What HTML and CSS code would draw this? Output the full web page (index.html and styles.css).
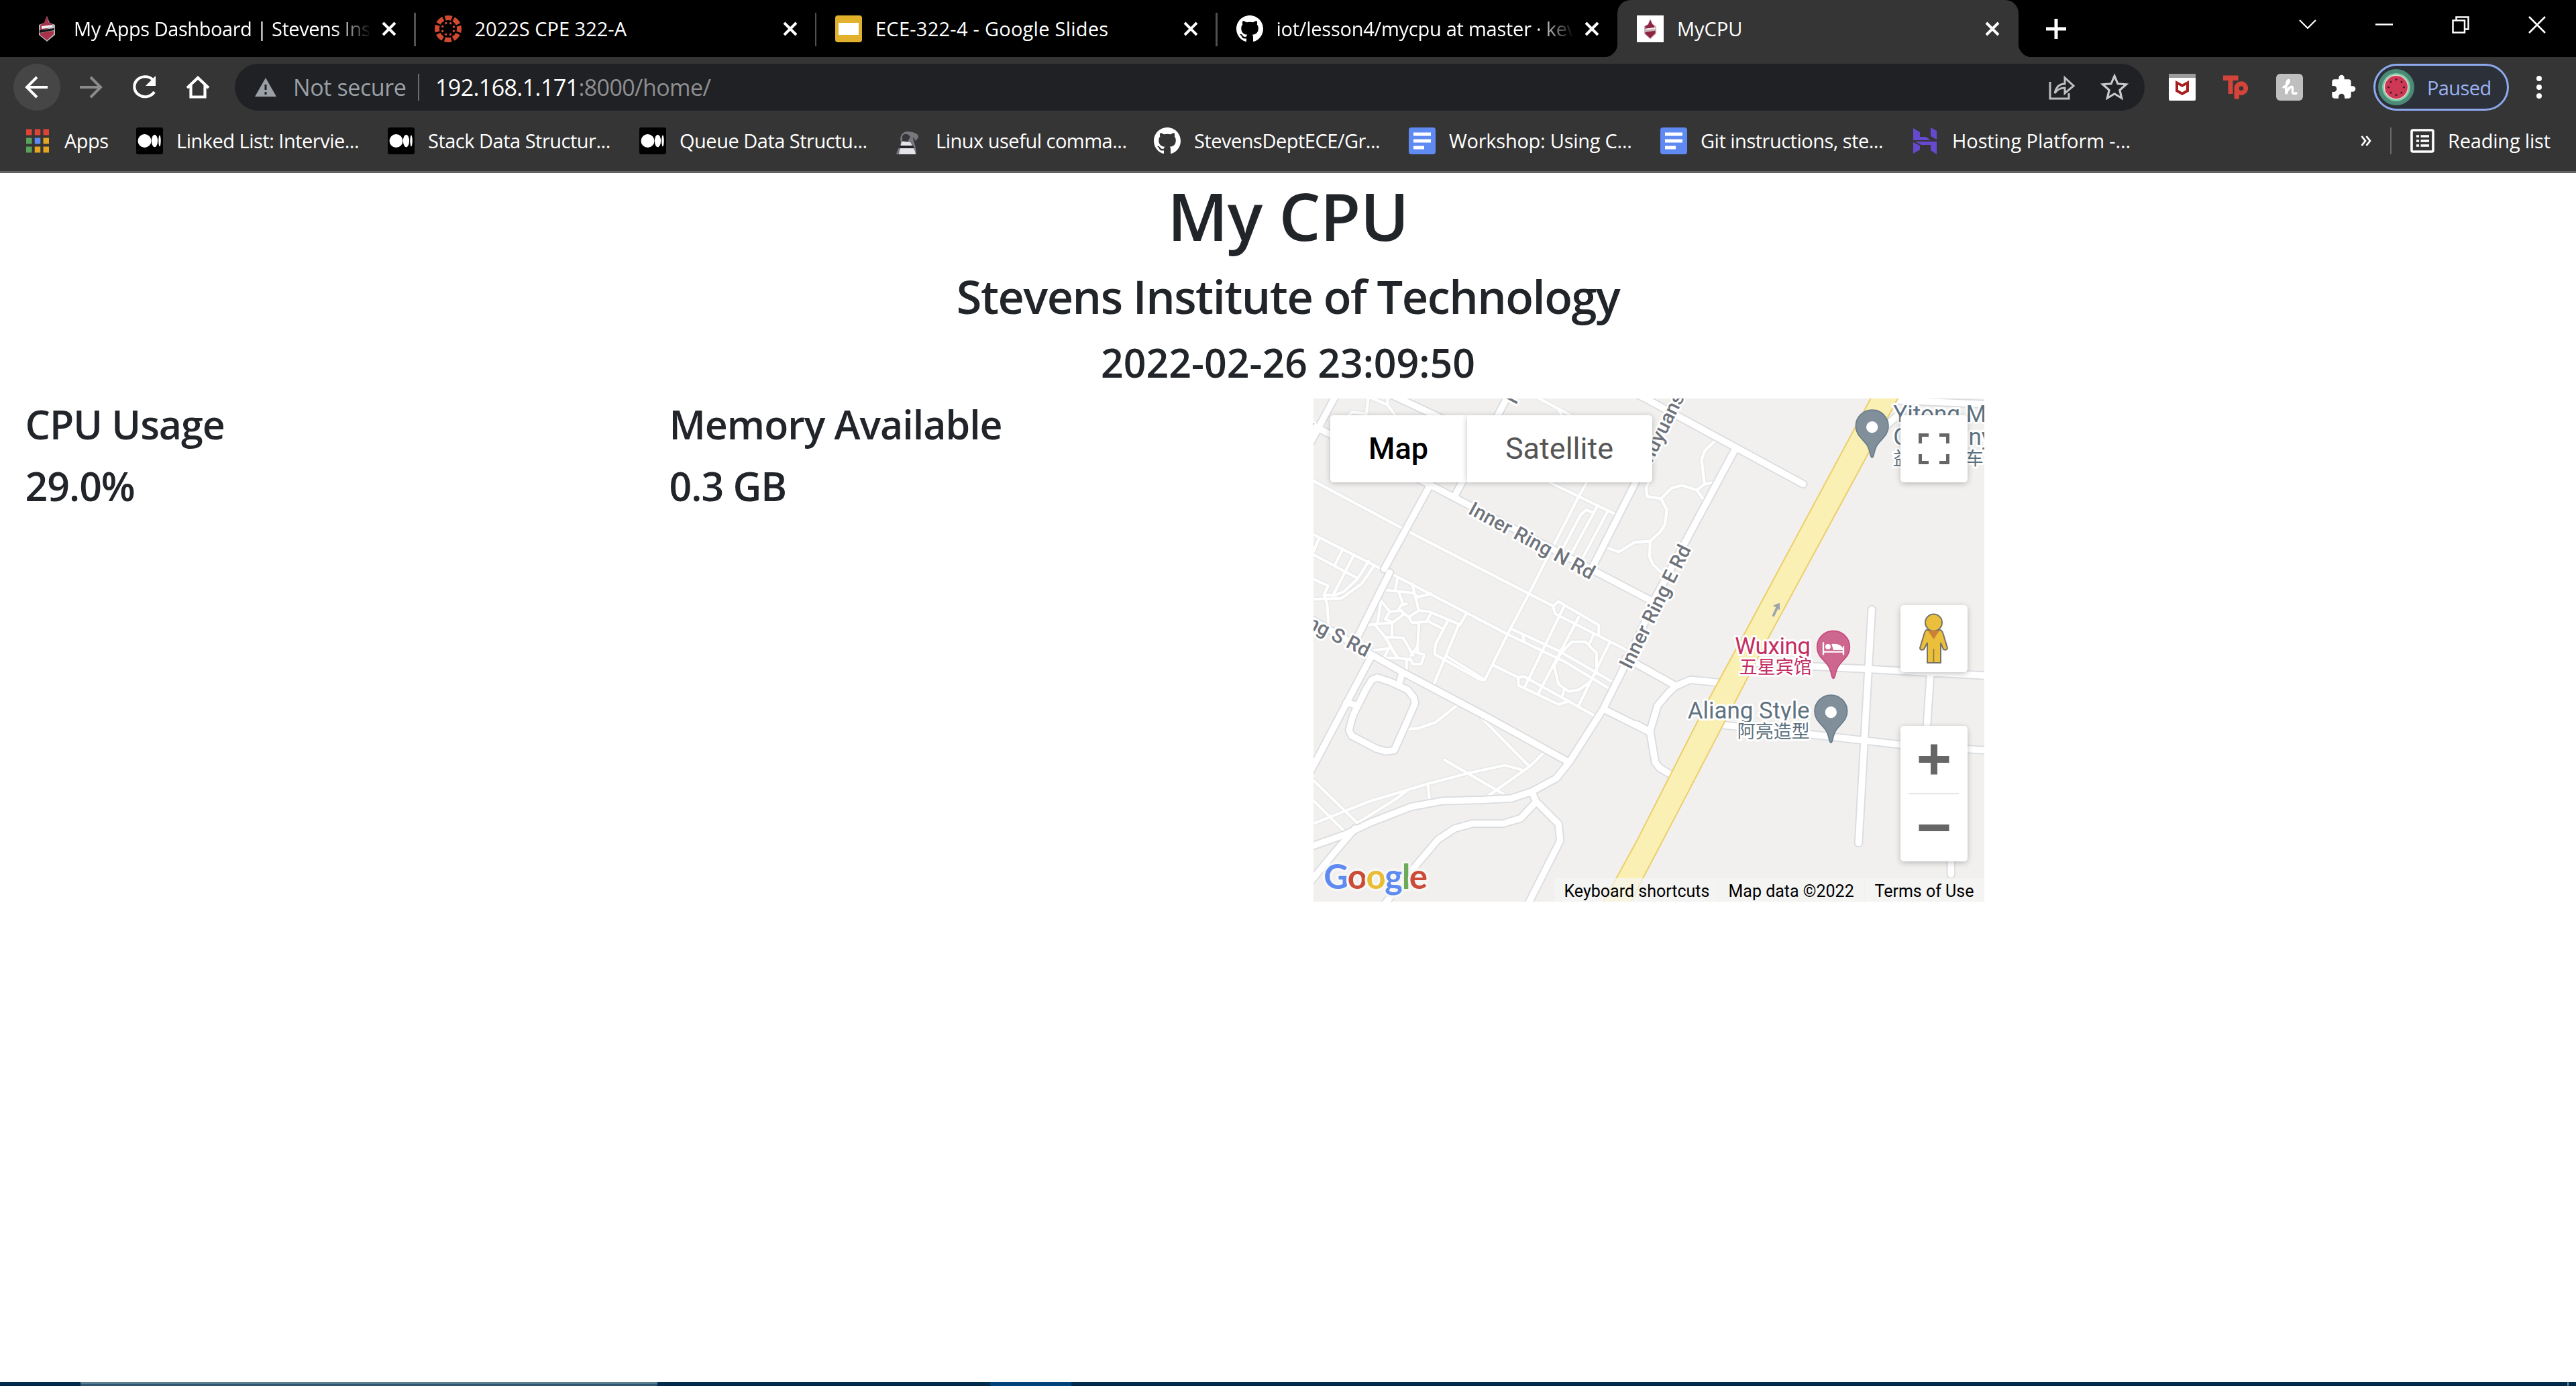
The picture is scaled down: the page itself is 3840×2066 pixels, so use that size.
FILE: index.html
```html
<!DOCTYPE html>
<html lang="en">
<head>
<meta charset="utf-8">
<title>MyCPU</title>
<link rel="stylesheet" href="styles.css">
</head>
<body>
<svg class="defs" width="0" height="0" aria-hidden="true">
  <defs>
    <symbol id="x" viewBox="0 0 22 22"><path d="M2 2L20 20M20 2L2 20" fill="none" stroke="#fff" stroke-width="4"/></symbol>
    <symbol id="github" viewBox="0 0 16 16"><path fill="#fff" d="M8 0C3.58 0 0 3.58 0 8c0 3.54 2.29 6.53 5.47 7.59.4.07.55-.17.55-.38 0-.19-.01-.82-.01-1.49-2.01.37-2.53-.49-2.69-.94-.09-.23-.48-.94-.82-1.13-.28-.15-.68-.52-.01-.53.63-.01 1.08.58 1.23.82.72 1.21 1.87.87 2.33.66.07-.52.28-.87.51-1.07-1.78-.2-3.64-.89-3.64-3.95 0-.87.31-1.59.82-2.15-.08-.2-.36-1.02.08-2.12 0 0 .67-.21 2.2.82.64-.18 1.32-.27 2-.27s1.36.09 2 .27c1.53-1.04 2.2-.82 2.2-.82.44 1.1.16 1.92.08 2.12.51.56.82 1.27.82 2.15 0 3.07-1.87 3.75-3.65 3.95.29.25.54.73.54 1.48 0 1.07-.01 1.93-.01 2.2 0 .21.15.46.55.38A8.01 8.01 0 0 0 16 8c0-4.42-3.58-8-8-8z"/></symbol>
    <symbol id="medium" viewBox="0 0 40 40"><rect width="40" height="40" rx="3"/><g fill="#fff"><circle cx="12.500" cy="20" r="10"/><ellipse cx="27.500" cy="20" rx="4.600" ry="9.300"/><ellipse cx="35" cy="20" rx="1.700" ry="8.500"/></g></symbol>
    <symbol id="doc" viewBox="0 0 40 40"><rect width="40" height="40" rx="4" fill="#5e8af2"/><path d="M7 10H33M7 20H33M7 30H23" stroke="#fff" stroke-width="5"/></symbol>
    <symbol id="crest" viewBox="0 0 40 40"><path d="M20 1L24 11L32 14V29L20 39L8 29V14L16 11Z" fill="#b5b5b8"/><path d="M20 1L23 11L28 13V18L10 22V14L16 11ZM10 26L30 23V28L20 37L10 29Z" fill="#a8324c"/><path d="M9 22L31 19V22L9 26Z" fill="#16161a"/><path d="M12 18L28 16" stroke="#eee" stroke-width="4"/></symbol>
    <symbol id="crest-light" viewBox="0 0 40 40"><path d="M20 0L25 10L32 14V29L20 40L8 29V14L15 10Z" fill="#c9b3b9"/><path d="M20 1L24 10L28 13V17L10 20V14L16 11ZM10 26L30 23V28L20 38L10 29Z" fill="#8e2440"/><path d="M11 20L30 18" stroke="#f1ecee" stroke-width="3"/></symbol>
  </defs>
</svg>
<header class="browser">
  <div class="tabs">
    <div class="tab"><svg class="fav"><use href="#crest"/></svg><span class="title fade t1">My Apps Dashboard | Stevens Ins</span><svg class="close"><use href="#x"/></svg></div>
    <div class="tab"><svg class="fav" viewBox="0 0 40 40"><circle cx="20" cy="20" r="16.500" fill="none" stroke="#cf4a30" stroke-width="7" stroke-dasharray="10 2.960" stroke-dashoffset="5"/><circle cx="20" cy="20" r="9" fill="none" stroke="#cf4a30" stroke-width="3" stroke-dasharray="3 4.070" stroke-dashoffset="-2"/></svg><span class="title t2">2022S CPE 322-A</span><svg class="close"><use href="#x"/></svg></div>
    <div class="tab"><svg class="fav" viewBox="0 0 40 40"><rect width="40" height="40" rx="4" fill="#e2b12c"/><rect x="5" y="11" width="30" height="18" fill="#fff"/></svg><span class="title t3">ECE-322-4 - Google Slides</span><svg class="close"><use href="#x"/></svg></div>
    <div class="tab"><svg class="fav"><use href="#github"/></svg><span class="title fade t4">iot/lesson4/mycpu at master · kev</span><svg class="close"><use href="#x"/></svg></div>
    <div class="tab active"><svg class="fav" viewBox="0 0 40 40"><rect width="40" height="40" fill="#fff"/><use href="#crest-light" x="5" y="4" width="30" height="33"/></svg><span class="title t5">MyCPU</span><svg class="close"><use href="#x"/></svg></div>
    <svg class="new-tab" viewBox="0 0 30 30"><path d="M15 0V30M0 15H30" stroke="#fff" stroke-width="5"/></svg>
    <div class="window-buttons">
      <svg viewBox="0 0 26 26"><path d="M1 6L13 18L25 6" fill="none" stroke="#fff" stroke-width="2.200"/></svg>
      <svg viewBox="0 0 26 26"><path d="M0 12.500H26" stroke="#fff" stroke-width="2.500"/></svg>
      <svg viewBox="0 0 26 26"><path d="M1.500 6.500H19V24.500H1.500ZM6.500 6V1.500H24.500V19.500H19.500" fill="none" stroke="#fff" stroke-width="2.500"/></svg>
      <svg viewBox="0 0 26 26"><path d="M1 1L25 25M25 1L1 25" stroke="#fff" stroke-width="2.500"/></svg>
    </div>
  </div>
  <div class="toolbar">
    <span class="nav back"><svg viewBox="0 0 40 40"><path d="M36 20H6M20 5L5 20L20 35" fill="none" stroke="#fff" stroke-width="4"/></svg></span>
    <span class="nav"><svg viewBox="0 0 40 40"><path d="M4 20H34M20 5L35 20L20 35" fill="none" stroke="#8b8b8b" stroke-width="4"/></svg></span>
    <span class="nav"><svg viewBox="0 0 40 40"><path d="M33 9A16 15 0 1 0 35 27" fill="none" stroke="#fff" stroke-width="4.200"/><path d="M37 3V18H22Z" fill="#fff"/></svg></span>
    <span class="nav"><svg viewBox="0 0 40 40"><path d="M4 21L20 6L36 21M9.500 17V34.500H30.500V17" fill="none" stroke="#fff" stroke-width="4.200"/></svg></span>
    <div class="omnibox">
      <svg class="warn" viewBox="0 0 32 28"><path d="M16 0L32 28H0Z" fill="#9aa0a6"/><path d="M16 10V18M16 21V25" stroke="#202124" stroke-width="3"/></svg>
      <span class="insecure">Not secure</span>
      <span class="url">192.168.1.171<i>:8000/home/</i></span>
      <svg class="share" viewBox="0 0 40 40"><path d="M3 12V37H31V29M10 29C12 19 18 15 25 15V6L38 18L25 29V21C18 21 14 23 10 29Z" fill="none" stroke="#bcbec1" stroke-width="3"/></svg>
      <svg class="star" viewBox="0 0 40 40"><path d="M20 4L24.700 15L36.500 16L27.500 24L30.200 35.500L20 29.300L9.800 35.500L12.500 24L3.500 16L15.300 15Z" fill="none" stroke="#c8c9cc" stroke-width="3"/></svg>
    </div>
    <div class="extensions">
      <svg viewBox="0 0 40 40"><rect width="40" height="40" rx="2" fill="#fff"/><path d="M0 6V2Q0 0 2 0H38Q40 0 40 2V6Z" fill="#9c9c9c"/><path d="M10 10L20 15.500L30 10V26.500L20 32L10 26.500ZM14 16.500V24L20 27.500L26 24V16.500L20 20Z" fill="#a81e1e" fill-rule="evenodd"/></svg>
      <svg viewBox="0 0 40 40"><path d="M1 2.500H23.500V10H15.500V30H8.500V10H1Z" fill="#d5443a"/><path d="M17.500 37.500V22A10.300 10.300 0 1 1 25 31.500V37.500ZM28 18.500A3.200 3.200 0 1 0 28 25A3.200 3.200 0 1 0 28 18.500Z" fill="#d5443a" fill-rule="evenodd"/></svg>
      <svg viewBox="0 0 40 40"><rect width="40" height="40" rx="6" fill="#bfbfbf"/><path d="M11 20C17 18 21 10 18.500 9.500S14 20 15 30C17 22 24 16 24.500 21S22 31 30 29" fill="none" stroke="#fff" stroke-width="3.500" stroke-linecap="round"/></svg>
      <svg viewBox="0 0 24 24"><path fill="#fff" d="M20.500 11H19V7c0-1.100-.9-2-2-2h-4V3.500a2.500 2.500 0 0 0-5 0V5H4c-1.100 0-2 .9-2 2v3.800h1.500a2.700 2.700 0 0 1 0 5.400H2V20c0 1.100.9 2 2 2h3.800v-1.500a2.700 2.700 0 0 1 5.400 0V22H17c1.100 0 2-.9 2-2v-4h1.500a2.500 2.500 0 0 0 0-5z"/></svg>
    </div>
    <div class="profile">
      <svg viewBox="0 0 54 54"><circle cx="27" cy="27" r="27" fill="#4b8a76"/><circle cx="27" cy="27" r="21" fill="#7ccaa7"/><circle cx="27" cy="27" r="18.500" fill="#f0d5cf"/><circle cx="27" cy="27" r="17" fill="#cf3854"/><g fill="#33202a"><circle cx="27" cy="15.500" r="1.500"/><circle cx="27" cy="38.500" r="1.500"/><circle cx="15.500" cy="27" r="1.500"/><circle cx="38.500" cy="27" r="1.500"/><circle cx="19" cy="19" r="1.500"/><circle cx="35" cy="19" r="1.500"/><circle cx="19" cy="35" r="1.500"/><circle cx="35" cy="35" r="1.500"/></g></svg>
      <span>Paused</span>
    </div>
    <svg class="kebab" viewBox="0 0 8 34"><g fill="#fff"><circle cx="4" cy="4" r="4"/><circle cx="4" cy="17" r="4"/><circle cx="4" cy="30" r="4"/></g></svg>
  </div>
  <div class="bookmarks">
    <div class="bm apps"><svg viewBox="0 0 34 36"><path d="M0 5H34" stroke="#dc4437" stroke-width="9" stroke-dasharray="8.500 4.250"/><path d="M0 18H8.500" stroke="#5ba15a" stroke-width="9"/><path d="M12.750 18H21.250" stroke="#5e8af2" stroke-width="9"/><path d="M25.500 18H34M12.750 31H34" stroke="#e3a522" stroke-width="9" stroke-dasharray="8.500 4.250"/><path d="M0 31H8.500" stroke="#5ba15a" stroke-width="9"/></svg><span>Apps</span></div>
    <div class="bm"><svg><use href="#medium"/></svg><span>Linked List: Intervie...</span></div>
    <div class="bm"><svg><use href="#medium"/></svg><span>Stack Data Structur...</span></div>
    <div class="bm queue"><svg><use href="#medium"/></svg><span>Queue Data Structu...</span></div>
    <div class="bm linux"><svg viewBox="0 0 40 40"><path d="M1 40C3 32 7 28 8 22C5 12 11 5 20 6C27 7 35 9 34 15L30 20L26 14C26 20 31 28 31 40Z" fill="#77777e"/><path d="M9 21L22 22L28 33L30 40H5Z" fill="#e6e6ea"/><path d="M6 27L26 27L28 31L5 31Z" fill="#242428"/><path d="M10 13C13 8 19 9 22 14L18 21L10 20Z" fill="#35353a"/></svg><span>Linux useful comma...</span></div>
    <div class="bm gh"><svg><use href="#github"/></svg><span>StevensDeptECE/Gr...</span></div>
    <div class="bm work"><svg><use href="#doc"/></svg><span>Workshop: Using C...</span></div>
    <div class="bm"><svg><use href="#doc"/></svg><span>Git instructions, ste...</span></div>
    <div class="bm host"><svg viewBox="0 0 40 40"><path d="M2 1L12 7V14L21 14L28 19H2ZM28 0L37 5V18L28 13ZM2 22L12 27V33L2 39ZM5 21H37V40L28 34V26H14Z" fill="#6749cf"/></svg><span>Hosting Platform -...</span></div>
    <svg class="more" viewBox="0 0 16 14"><path d="M1.500 0L7 7L1.500 14M8.500 0L14 7L8.500 14" fill="none" stroke="#fff" stroke-width="2.800"/></svg>
    <div class="bm reading"><svg viewBox="0 0 36 36"><rect x="2" y="2" width="32" height="32" rx="2" fill="none" stroke="#fff" stroke-width="3.600"/><path d="M9 11H13M9 18H13M9 25H13M15.500 11H28M15.500 18H28M15.500 25H28" stroke="#fff" stroke-width="3.400"/></svg><span>Reading list</span></div>
  </div>
</header>
<main>
  <h1>My CPU</h1>
  <h2>Stevens Institute of Technology</h2>
  <h3 class="time">2022-02-26 23:09:50</h3>
  <div class="row">
    <section><h3>CPU Usage</h3><h3>29.0%</h3></section>
    <section><h3>Memory Available</h3><h3>0.3 GB</h3></section>
    <section>
      <div class="map">
        <svg class="canvas" viewBox="0 0 3000 2250">
          <defs>
            <g id="minor">
              <g transform="translate(-54 -42)">
                <path d="M54 410L455 625L1125 970M300 30L290 115M205 125L225 103L290 110M290 30L385 70L425 125M385 30V70M1040 30L1200 115M1150 90L1165 120M1110 417L1240 480L1405 560M1275 420L1240 480L1015 920L925 1090L820 1300L800 1300L595 1185L600 1140L655 1035M1325 520L1200 750M1370 545L1255 760M1300 550L1275 540L1250 560L1165 720M1355 705L1420 728L1490 685L1560 680"/>
                <path d="M54 650L350 800L430 840L920 1095L1180 1220L1370 1335M945 1075L1150 1170L1400 1315M80 665L54 725M54 740L250 845M185 715L150 785M235 740L145 915M300 770L250 850L190 905L150 922L100 920M325 790L270 870L180 935L54 940M54 850L120 880L100 920L115 960L122 1070"/>
                <path d="M430 840L420 900M365 897L500 912L520 930L580 915M495 870L525 990M435 905L455 965L470 960M350 940L395 995L375 1030L410 1043L455 1010L450 990L395 995M450 960L435 985M455 1000L480 1020L525 990L570 995L710 1053L740 1000M480 1020L495 1045L560 1040L580 1000M525 1050L520 1150L490 1190M560 1035L630 1070M405 1045V1110L455 1112L500 1190M355 950L340 1050L300 1055M330 1055L375 1110L430 1200M405 1110H375M340 1050L405 1045M705 1050L590 1325M650 1195L820 1300"/>
                <path d="M310 1170L390 1160L370 1200M395 1150L430 1202L490 1210M520 1140V1175M490 1190L500 1175L550 1187L535 1230H500L485 1205M470 1210V1260M370 1202H430"/>
                <path d="M1125 970L1150 950L1330 1055V1100M1125 970L1135 1005L1450 1165L1490 1190M1175 970L1000 1330M1240 1020L1060 1360M1305 1100L1290 1135M1380 1130L1240 1415M1170 1170L1210 1130L1270 1130L1320 1180V1260L1290 1310L1240 1345L1195 1352L1150 1320L1130 1240L1160 1180ZM990 1100L995 1130"/>
              </g>
              <g transform="translate(-54 1098)">
                <path d="M860 95L970 150V185L1150 270L1200 255M970 150L995 145L1310 320M1175 205L1165 235M465 380L520 378L600 350L695 275M800 325L1020 548L1085 485M1020 548L820 690M640 518L920 680M995 565L910 542L745 578L565 625L300 705L54 803M565 625L573 700M480 650L420 695L250 800M54 610L250 800M54 700L190 835"/>
              </g>
              <g transform="translate(1446 -42) scale(1.033 1)">
                <path d="M340 230L295 275L280 315L293 425L345 415M293 425L260 452L195 430L150 443L105 490L130 540L122 605L100 640L58 680L0 685M58 680L55 750L70 785L110 825M260 452L300 510M105 490L45 480L40 440L60 400"/>
              </g>
            </g>
            <g id="major">
              <g transform="translate(-54 -42)">
                <path d="M158 20L30 260M30 152L560 420L1590 960M390 20L700 165M935 10L690 470M575 430L370 805M395 820L250 1110M1300 800L1500 405L1705 30"/>
              </g>
              <g transform="translate(-54 1098)">
                <path d="M30 -120L310 45L460 130L800 310L1190 525M315 50L30 590M1570 -170L1430 130L1350 290L1200 525L1140 600L1030 660L940 690L810 697L630 702L490 728L305 800L200 850L30 910M240 825L150 930L30 1075M1030 660L1050 705L980 780L900 803H765L685 825L610 875L500 1005L430 1090L370 1165M1050 705L1150 805L1157 880L1010 1170M1350 290L1550 390M1450 65L1500 88M450 130L435 185M200 262L250 275"/>
                <path d="M235 310L225 340L213 385L225 410L335 468L378 480L415 475L460 375L508 265L503 240L475 205L400 170L340 150L315 160L290 200Z"/>
              </g>
              <g transform="translate(1446 -42) scale(1.033 1)">
                <path d="M-50 0L30 38L430 262L720 425M425 270L40 1010M1110 50L1520 68M1050 190L1150 100M1017 985L1003 1240L985 1570L960 2030"/>
              </g>
              <g transform="translate(1446 1098) scale(1.033 1)">
                <path d="M-30 70L0 90L165 185M400 178L350 172L232 160L165 190L135 220L90 275L57 390L80 530L100 555L190 610M0 360L55 390M460 80L760 100L1000 112L1520 142M340 358L440 370L760 405L1140 450L1520 476M1270 145L1255 380M1360 940V1030"/>
              </g>
            </g>
          </defs>
          <rect width="3000" height="2250" fill="#f1f0ee"/>
          <use href="#minor" class="minor-casing"/><use href="#minor" class="minor-fill"/>
          <use href="#major" class="major-casing"/><use href="#major" class="major-fill"/>
          <path transform="translate(1446 -42) scale(1.033 1)" d="M1023 22L465 1095L310 1390L0 2020L-155 2312L-34 2312L30 2180L165 1915L480 1290L565 1120L1090 120L1140 22Z" fill="#faf0b3" stroke="#eccf6c" stroke-width="6"/>
          <path d="M2052 972L2070 932L2057 927L2083 916L2084 945L2077 938L2059 975Z" fill="#9ba4ae" stroke="#9ba4ae" stroke-width="3"/>
          <g class="road-label">
            <text transform="translate(688 513) rotate(28.500)" textLength="625">Inner Ring N Rd</text>
            <text transform="translate(1419 1215) rotate(-63.400)" textLength="606">Inner Ring E Rd</text>
            <text transform="translate(234 1158) rotate(27)" text-anchor="end">Ring S Rd</text>
            <text transform="translate(1513 290) rotate(-63.500)">huyuans</text>
            <text transform="translate(905 30) rotate(-62)">N</text>
            <text transform="translate(6 108) rotate(-62)" text-anchor="end">d</text>
          </g>
          <g class="place">
            <text x="2593" y="106">Yitong Mobile</text><text x="2593" y="208">Company</text><text class="cjk" x="2591" y="298">益通电动车</text>
            <text x="1673" y="1431" textLength="546">Aliang Style</text><text class="cjk" x="1895" y="1518">阿亮造型</text>
          </g>
          <g class="place hotel"><text x="1885" y="1144" textLength="338">Wuxing</text><text class="cjk" x="1904" y="1230">五星宾馆</text></g>
          <g stroke-width="5">
            <g id="pin" fill="#818f9a" stroke="#667b8b"><path d="M2498 264C2488 264 2492 235 2475 208C2455 178 2425 165 2425 124A73 73 0 0 1 2571 124C2571 165 2541 178 2521 208C2504 235 2508 264 2498 264Z"/><circle cx="2498" cy="128" r="26" fill="#fff" stroke="none"/></g>
            <use href="#pin" x="-184" y="1275"/>
            <path transform="translate(-173 988)" d="M2498 264C2488 264 2492 235 2475 208C2455 178 2425 165 2425 124A73 73 0 0 1 2571 124C2571 165 2541 178 2521 208C2504 235 2508 264 2498 264Z" fill="#ce678f" stroke="#c8497b"/>
            <path d="M2280 1090V1147M2280 1133H2372M2370 1147V1108" fill="none" stroke="#fff" stroke-width="7"/><circle cx="2301" cy="1110" r="12" fill="#fff"/><path d="M2317 1098Q2360 1092 2370 1125H2325Z" fill="#fff"/>
          </g>
          <text class="google" x="46" y="2192" textLength="464"><tspan fill="#5e8af2">G</tspan><tspan fill="#cb4b36">o</tspan><tspan fill="#e9bd2f">o</tspan><tspan fill="#5e8af2">g</tspan><tspan fill="#6cab5a">l</tspan><tspan fill="#cb4b36">e</tspan></text>
        </svg>
        <div class="map-type"><b>Map</b><span>Satellite</span></div>
        <div class="ctl full"><svg viewBox="0 0 46 46"><path d="M2.500 15V2.500H15M31 2.500H43.500V15M43.500 31V43.500H31M15 43.500H2.500V31" fill="none" stroke="#666" stroke-width="5"/></svg></div>
        <div class="ctl pegman"><svg viewBox="0 0 46 76"><g fill="#eabf3c" stroke="#777266" stroke-width="2"><path d="M12 25H32Q35 25 37 32L43 52Q42 56 37 54L33 44V74H13V44L8 54Q2 56 2 52L8 32Q10 25 12 25Z"/><circle cx="22.500" cy="14" r="12.500"/></g><path d="M14 26H31L22.500 39Z" fill="#cc8035"/><path d="M22.500 53V73" stroke="#857344" stroke-width="1.500"/></svg></div>
        <div class="ctl zoom"><svg viewBox="0 0 46 46"><path d="M23 .5V45.500M.5 23H45.500" stroke="#666" stroke-width="10"/></svg><hr><svg viewBox="0 0 46 46"><path d="M.5 23H45.500" stroke="#666" stroke-width="10"/></svg></div>
        <div class="legal"><span class="k1">Keyboard shortcuts</span><span class="k2">Map data ©2022</span><span class="k3">Terms of Use</span></div>
      </div>
    </section>
  </div>
</main>
<footer class="taskbar"><i class="task"></i><i class="spot"></i><i class="peek"></i></footer>
</body>
</html>
```
FILE: styles.css
```css
* { box-sizing: border-box; }
body {
  margin: 0;
  height: 2066px;
  display: flex;
  flex-direction: column;
  overflow: hidden;
  background: #fff;
  color: #212529;
  font-family: "Open Sans", "Noto Sans", sans-serif;
}
svg { display: block; flex: none; }
.defs { position: absolute; }

/* Browser frame */
.browser { height: 258px; background: #353535; border-bottom: 3px solid #626262; color: #fff; font-size: 29px; white-space: nowrap; }
.tabs { display: flex; align-items: center; height: 85px; padding-left: 21px; background: #000; }
.tab { position: relative; display: flex; align-items: center; width: 597.5px; height: 85px; padding: 0 27px 0 29px; }
.tab::after { content: ""; position: absolute; right: -1px; top: 19px; width: 2.5px; height: 50px; background: #515151; }
.tab:nth-child(4)::after, .tab.active::after { display: none; }
.fav { width: 40px; height: 40px; }
.title { width: 440px; margin-left: 20px; overflow: hidden; }
.t1 { letter-spacing: -.45px; }
.t3 { letter-spacing: .25px; }
.t4 { letter-spacing: -.25px; }
.fade { -webkit-mask-image: linear-gradient(90deg, #000 88%, transparent 101%); mask-image: linear-gradient(90deg, #000 88%, transparent 101%); }
.close { width: 22px; height: 22px; margin-left: 19px; }
.active { background: #353535; border-radius: 20px 20px 0 0; }
.active::before {
  content: ""; position: absolute; bottom: 0; left: -20px; right: -20px; height: 20px; z-index: 0;
  background: radial-gradient(circle at 0 0, transparent 20px, #353535 20.5px) left / 20px 20px no-repeat,
              radial-gradient(circle at 100% 0, transparent 20px, #353535 20.5px) right / 20px 20px no-repeat;
}
.new-tab { width: 30px; height: 30px; margin-left: 41px; }
.window-buttons { display: flex; gap: 88px; margin: -12px 45px 0 auto; }
.window-buttons svg { width: 26px; height: 26px; }

.toolbar { display: flex; align-items: center; height: 90px; padding-left: 20px; }
.nav { display: grid; place-items: center; width: 70px; height: 70px; margin-right: 10px; border-radius: 50%; }
.nav svg { width: 40px; height: 40px; }
.back { background: #464646; }
.omnibox { display: flex; align-items: center; width: 2847px; height: 70px; margin-left: 10px; padding-left: 30px; border-radius: 35px; background: #202124; font-size: 34px; }
.warn { width: 32px; height: 28px; }
.insecure { width: 188px; margin-left: 25px; color: #9aa0a6; border-right: 2px solid #6b6d70; line-height: 40px; letter-spacing: -.4px; }
.url { margin-left: 24px; letter-spacing: -.6px; }
.url i { font-style: normal; color: #8e8f91; }
.share { width: 40px; height: 40px; margin-left: auto; }
.star { width: 42px; height: 42px; margin: 0 24px 0 38px; }
.extensions { display: flex; gap: 40px; margin-left: 36px; }
.extensions svg { width: 40px; height: 40px; }
.profile { display: flex; align-items: center; width: 202px; height: 70px; margin-left: 25px; padding-left: 4px; border: 3px solid #8ea9ee; border-radius: 35px; background: #2c3038; color: #9ab2f2; font-size: 29px; letter-spacing: -.6px; }
.profile svg { width: 54px; height: 54px; margin-right: 19px; }
.kebab { width: 8px; height: 34px; margin-left: 41px; }

.bookmarks { display: flex; align-items: center; height: 70px; padding-left: 39px; letter-spacing: -.5px; }
.bm { display: flex; align-items: center; width: 375px; }
.bm span { margin-top: -2px; }
.bm svg { width: 40px; height: 40px; margin-right: 20px; }
.bm.apps { width: 164px; }
.bm.apps svg { width: 34px; height: 36px; margin-right: 23px; }
.bm.queue { width: 382px; }
.bm.linux { width: 385px; }
.bm.gh { width: 380px; }
.bm.work { letter-spacing: -.25px; }
.bm.host { letter-spacing: -.1px; }
.more { width: 16px; height: 16px; margin: 0 28px 0 294px; }
.bm.reading { width: 260px; height: 40px; padding-left: 28px; border-left: 2px solid #6a6a6a; letter-spacing: -.2px; }
.bm.reading svg { width: 36px; height: 36px; margin-right: 20px; }

/* Page */
main { flex: 1; text-align: center; }
h1, h2, h3 { margin: 0 0 20px; font-weight: 600; line-height: 1.2; }
h1 { height: 120px; padding-top: 5px; font-size: 98px; letter-spacing: -.6px; }
h2 { height: 84px; padding-top: 3px; font-size: 68.5px; letter-spacing: -1.5px; }
h3 { height: 72px; padding-top: 3px; font-size: 59px; letter-spacing: -1px; }
.time { letter-spacing: 0; }
.row { display: grid; grid-template-columns: repeat(4, 960px); text-align: left; }
.row section { padding-left: 37.500px; }

/* Map widget */
.map { position: relative; width: 1000px; height: 750px; overflow: hidden; font-family: Roboto, sans-serif; }
.canvas { width: 1000px; height: 750px; }
.minor-casing, .minor-fill, .major-casing, .major-fill { fill: none; stroke-linejoin: round; stroke-linecap: round; }
.minor-casing { stroke: #e7e8e9; stroke-width: 21; }
.minor-fill { stroke: #fff; stroke-width: 12; }
.major-casing { stroke: #dadce0; stroke-width: 39; }
.major-fill { stroke: #fff; stroke-width: 28; }
.road-label, .place { paint-order: stroke; stroke: #fff; stroke-width: 18; stroke-linejoin: round; }
.road-label { fill: #6f737b; font-size: 88px; font-weight: 500; }
.place { fill: #5e7280; font-size: 105px; }
.hotel { fill: #c52e62; }
.cjk { font-family: "Noto Sans CJK SC", sans-serif; font-size: 81px; }
.google { font-family: Lato, sans-serif; font-size: 153px; font-weight: 700; paint-order: stroke; stroke: #f6f6f5; stroke-width: 22; stroke-linejoin: round; }
.map-type { position: absolute; left: 25px; top: 25px; display: flex; height: 100px; font-size: 45px; line-height: 100px; text-align: center; }
.map-type b, .map-type span { background: #fff; box-shadow: 0 1px 10px -1px rgba(0, 0, 0, .3); }
.map-type b { width: 204px; border-radius: 5px 0 0 5px; color: #000; font-weight: 500; }
.map-type span { width: 276px; border-radius: 0 5px 5px 0; color: #565656; }
.ctl { position: absolute; right: 25px; width: 100px; height: 100px; display: grid; place-items: center; border-radius: 5px; background: #fff; box-shadow: 0 2px 10px -1px rgba(0, 0, 0, .3); }
.ctl svg { width: 46px; height: 46px; }
.full { top: 25px; }
.pegman { top: 308px; }
.pegman svg { height: 76px; }
.zoom { top: 488px; height: 202px; grid-template-rows: 100px 2px 100px; }
.zoom hr { width: 75px; height: 2px; margin: 0; border: 0; background: #e6e6e6; }
.legal { position: absolute; right: 0; bottom: 0; display: flex; gap: 1px; height: 35px; color: #000; font-size: 25px; line-height: 39px; white-space: nowrap; }
.legal span { padding-left: 15px; background: rgba(245, 245, 245, .7); }
.k1 { width: 244px; }
.k2 { width: 217px; }
.k3 { width: 178px; }

/* Top edge of the desktop taskbar */
.taskbar { display: flex; height: 6px; padding-left: 120px; background: linear-gradient(#002f50, #00264a); }
.task { width: 860px; border-top: 3px solid #587d8c; background: #315672; }
.spot { width: 121px; margin-left: 496px; background: #00437a; }
.peek { width: 2px; margin: 0 11px 0 auto; background: #6f8795; }
```
